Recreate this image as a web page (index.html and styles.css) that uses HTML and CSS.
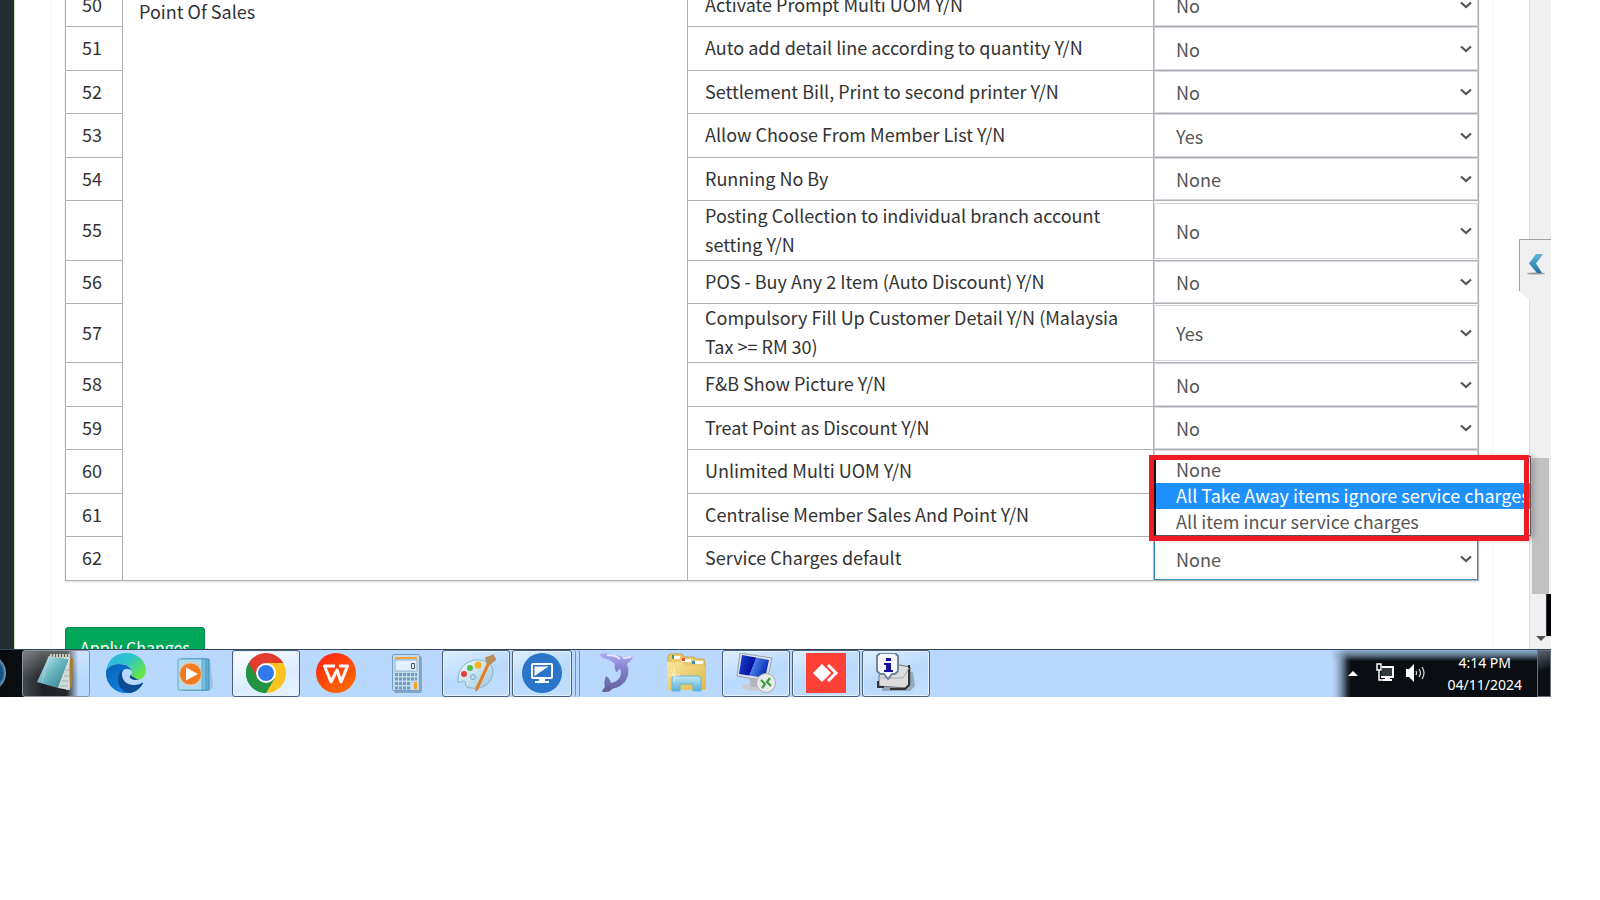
FILE: index.html
```html
<!DOCTYPE html>
<html lang="en">
<head>
<meta charset="utf-8">
<title>Point Of Sales settings</title>
<link rel="stylesheet" href="styles.css">
</head>
<body>
<svg class="defs" aria-hidden="true"><symbol id="chev" viewBox="0 0 12 8"><path d="M1 1.5 6 6 11 1.5" fill="none" stroke="#555" stroke-width="2.2"/></symbol></svg>
<main class="view">
  <aside class="side"></aside>
  <section class="content">
    <div class="panel">
      <table class="settings">
        <colgroup><col class="c-no"><col class="c-group"><col class="c-name"><col class="c-value"></colgroup>
        <tbody>
        <tr><td class="no">50</td><td class="group" rowspan="13">Point Of Sales</td><td class="name"><label for="s50">Activate Prompt Multi UOM Y/N</label></td><td class="value"><div class="pick"><select id="s50"><option>No</option><option>Yes</option></select><svg class="chev"><use href="#chev"/></svg></div></td></tr>
        <tr class="plus"><td class="no">51</td><td class="name"><label for="s51">Auto add detail line according to quantity Y/N</label></td><td class="value"><div class="pick"><select id="s51"><option>No</option><option>Yes</option></select><svg class="chev"><use href="#chev"/></svg></div></td></tr>
        <tr><td class="no">52</td><td class="name"><label for="s52">Settlement Bill, Print to second printer Y/N</label></td><td class="value"><div class="pick"><select id="s52"><option>No</option><option>Yes</option></select><svg class="chev"><use href="#chev"/></svg></div></td></tr>
        <tr class="plus"><td class="no">53</td><td class="name"><label for="s53">Allow Choose From Member List Y/N</label></td><td class="value"><div class="pick"><select id="s53"><option>Yes</option><option>No</option></select><svg class="chev"><use href="#chev"/></svg></div></td></tr>
        <tr><td class="no">54</td><td class="name"><label for="s54">Running No By</label></td><td class="value"><div class="pick"><select id="s54"><option>None</option></select><svg class="chev"><use href="#chev"/></svg></div></td></tr>
        <tr class="tall plus"><td class="no">55</td><td class="name"><label for="s55">Posting Collection to individual branch account setting Y/N</label></td><td class="value"><div class="pick"><select id="s55"><option>No</option><option>Yes</option></select><svg class="chev"><use href="#chev"/></svg></div></td></tr>
        <tr><td class="no">56</td><td class="name"><label for="s56">POS - Buy Any 2 Item (Auto Discount) Y/N</label></td><td class="value"><div class="pick"><select id="s56"><option>No</option><option>Yes</option></select><svg class="chev"><use href="#chev"/></svg></div></td></tr>
        <tr class="tall"><td class="no">57</td><td class="name"><label for="s57">Compulsory Fill Up Customer Detail Y/N (Malaysia Tax &gt;= RM 30)</label></td><td class="value"><div class="pick"><select id="s57"><option>Yes</option><option>No</option></select><svg class="chev"><use href="#chev"/></svg></div></td></tr>
        <tr class="plus"><td class="no">58</td><td class="name"><label for="s58">F&amp;B Show Picture Y/N</label></td><td class="value"><div class="pick"><select id="s58"><option>No</option><option>Yes</option></select><svg class="chev"><use href="#chev"/></svg></div></td></tr>
        <tr><td class="no">59</td><td class="name"><label for="s59">Treat Point as Discount Y/N</label></td><td class="value"><div class="pick"><select id="s59"><option>No</option><option>Yes</option></select><svg class="chev"><use href="#chev"/></svg></div></td></tr>
        <tr class="plus"><td class="no">60</td><td class="name"><label for="s60">Unlimited Multi UOM Y/N</label></td><td class="value"><div class="pick"><select id="s60"><option></option></select></div></td></tr>
        <tr><td class="no">61</td><td class="name"><label for="s61">Centralise Member Sales And Point Y/N</label></td><td class="value"><div class="pick"><select id="s61"><option></option></select></div></td></tr>
        <tr class="plus"><td class="no">62</td><td class="name"><label for="s62">Service Charges default</label></td><td class="value"><div class="pick"><select id="s62" class="active"><option>None</option></select><svg class="chev"><use href="#chev"/></svg>
          <ul class="popup" role="listbox" aria-label="Service Charges default">
            <li role="option">None</li>
            <li role="option" aria-selected="true" class="hot">All Take Away items ignore service charges</li>
            <li role="option">All item incur service charges</li>
          </ul>
          <div class="marker"></div></div></td></tr>
        </tbody>
      </table>
      <button class="apply" type="button">Apply Changes</button>
    </div>
  </section>
  <div class="scroll">
    <div class="thumb"></div>
    <div class="edge"></div>
    <svg class="down" viewBox="0 0 10 5"><path d="M0 0h10L5 5z" fill="#505050"/></svg>
  </div>
  <button class="drawer" type="button" aria-label="Open panel">
    <svg viewBox="0 0 32 62">
      <defs><linearGradient id="dg" x1="0" y1="0" x2="0" y2="1"><stop offset="0" stop-color="#5fb4dc"/><stop offset="1" stop-color="#1f779f"/></linearGradient></defs>
      <path d="M0 0H32V62H11L0 52z" fill="#efefef"/><path d="M.5 52V.5H32" fill="none" stroke="#a0a0a0"/>
      <ellipse cx="17" cy="34.500" rx="9" ry="1" fill="#999"/><path d="M17 15h7l-7 9.500 6 9.500h-5l-8-9.500z" fill="url(#dg)"/>
    </svg>
  </button>
</main>
<footer class="taskbar">
  <svg class="orb" viewBox="0 0 22 44"><defs><radialGradient id="og"><stop offset="0" stop-color="#2b7fc0"/><stop offset=".8" stop-color="#14507f"/><stop offset="1" stop-color="#7aa5c4"/></radialGradient></defs><circle cx="-12" cy="23" r="18" fill="url(#og)"/></svg>
  <nav class="tasks">
    <button class="task open dark" type="button" aria-label="Notepad"><svg viewBox="0 0 40 40">
      <defs><linearGradient id="n1" x1="0" y1="0" x2="1" y2="1"><stop offset="0" stop-color="#d5f2f3"/><stop offset=".5" stop-color="#67b3bf"/><stop offset="1" stop-color="#2f7885"/></linearGradient></defs>
      <path d="M32 4l5 2-1 28-6 3z" fill="#a97b35"/><path d="M15 4h19l-2 33-14-5z" fill="#e9eeee"/><path d="M13 3 33 6 22 35 1 29z" fill="url(#n1)"/><path d="M22 35l11-29 1 31z" fill="#d3dbd9"/><path d="M13 3l-7 27" stroke="#b9e1e4" opacity=".6"/><path d="M14 3h21" stroke="#c8c8bb" stroke-width="4" stroke-dasharray="2 1"/><path d="M24 33h8M26 28h6M28 23h5M30 17h4" stroke="#a5adad"/></svg></button>
    <button class="task" type="button" aria-label="Edge"><svg viewBox="0 0 40 40">
      <defs><linearGradient id="e1" x1="0" y1="0" x2="1" y2=".7"><stop offset="0" stop-color="#2bb4e8"/><stop offset=".5" stop-color="#2cc5cb"/><stop offset="1" stop-color="#6be83f"/></linearGradient><linearGradient id="e2" x1="0" y1="0" x2=".7" y2="1"><stop offset="0" stop-color="#0b62b5"/><stop offset="1" stop-color="#0c82e0"/></linearGradient></defs>
      <path d="M0 18C0 32 9 40 20 40c7 0 13-3 17-10L20 12z" fill="url(#e2)"/><path d="M0 18C2 6 10 0 20 0c12 0 20 8 20 17 0 6-4 10-10 10-4 0-7-2-6-4 1-1 2-2 2-4 0-4-4-8-12-8C7 11 2 14 0 18z" fill="url(#e1)"/><path d="M0 18c2-4 7-7 13-7 8 0 13 4 13 8 0 3-2 3-2 5L15 27l2 12C7 38-1 29 0 18z" fill="url(#e2)"/><path d="M16 17c-7 6-5 22 8 23 6-1 11-5 13-10z" fill="#0e4b96"/><path d="M26 19c0 3-2 3-2 4-1 2 2 4 6 4 3 0 5-1 7-2v4c-2 2-5 3-9 3-7 0-12-4-12-11 0-3 2-5 5-5s5 1 5 3z" fill="#b8d9fd"/></svg></button>
    <button class="task" type="button" aria-label="Media Player"><svg viewBox="0 0 40 40">
      <path d="M8 37l26 1 3-4-3-28H8z" fill="#7fa9c9" opacity=".5"/><rect x="8" y="6" width="25" height="31" rx="1" fill="#65aed4" stroke="#3b8dbb"/><rect x="5" y="6" width="25" height="31" rx="1" fill="#78bfdf" stroke="#4895bd"/><rect x="2" y="6" width="24" height="31" rx="1" fill="#b2dced" stroke="#65a9c7"/><circle cx="14.500" cy="21" r="11" fill="#f27a20" stroke="#f9c28e"/><path d="M10 14.500v13L22 21z" fill="#fff"/></svg></button>
    <button class="task open light" type="button" aria-label="Chrome"><svg viewBox="0 0 40 40">
      <path d="M20 20 2.700 10A20 20 0 0 1 37.300 10z" fill="#e33b2e"/><path d="M20 20 37.300 10A20 20 0 0 1 20 40z" fill="#fcc31e"/><path d="M20 20V40A20 20 0 0 1 2.700 10z" fill="#229342"/><path d="M20 10h17.300l-8.600 15z" fill="#fcc31e"/><path d="M2.700 10 11.300 25 20 20V10z" fill="#e33b2e"/><path d="M2.700 10 11.300 25 20 30l9-5-9 15A20 20 0 0 1 2.700 10z" fill="#229342"/><circle cx="20" cy="20" r="10" fill="#fff"/><circle cx="20" cy="20" r="8" fill="#2f7bed"/></svg></button>
    <button class="task" type="button" aria-label="WPS Office"><svg viewBox="0 0 40 40">
      <defs><linearGradient id="w1" x1="0" y1="0" x2=".7" y2="1"><stop offset="0" stop-color="#ff1f18"/><stop offset="1" stop-color="#ff6a00"/></linearGradient></defs><circle cx="20" cy="20" r="20" fill="url(#w1)"/><path d="M19 13H8.500L15 29l6-12 4 12 6.500-16H23" fill="none" stroke="#fff" stroke-width="3" stroke-linejoin="round"/></svg></button>
    <button class="task" type="button" aria-label="Calculator"><svg viewBox="0 0 40 40">
      <rect x="8" y="3" width="28" height="37" rx="2" fill="#6c8faf" opacity=".7"/><rect x="6.500" y="1.500" width="27" height="36" rx="1" fill="#c3dbea" stroke="#6f9fc3"/><rect x="9" y="4" width="22" height="2" fill="#f1a43a"/><rect x="9" y="7" width="22" height="11" fill="#e5f1fa" stroke="#8fb4d1"/><path d="M25.500 10.500h3v5h-3z" fill="none" stroke="#456"/><path d="M9 21.500h22M9 26h22M9 30.500h16M9 35h16" stroke="#6b9cc3" stroke-width="3" stroke-dasharray="3 1"/><rect x="28" y="29" width="3" height="7" fill="#f1a020"/></svg></button>
    <button class="task open" type="button" aria-label="Paint"><svg viewBox="0 0 40 40">
      <defs><linearGradient id="p1" x1="0" y1="0" x2="1" y2="1"><stop offset="0" stop-color="#f2fbff"/><stop offset="1" stop-color="#9cc9de"/></linearGradient></defs>
      <path d="M2 29C1 15 12 6 23 7c11 0 16 8 13 17-4 11-16 13-25 10-3-1 0-5-3-6-2 0-4 2-6 1z" fill="url(#p1)" stroke="#89b2c9"/><circle cx="8" cy="21" r="3" fill="#e6413a"/><circle cx="14" cy="15" r="3" fill="#53bb4d"/><circle cx="22" cy="12" r="3.500" fill="#fbb01c"/><circle cx="17" cy="24" r="2.500" fill="#c3dff3" stroke="#7fa6c2"/><path d="M34 11 22 37l-3 2 1-5 11-24z" fill="#e07f28"/><path d="M30 10c0-4-2-5 0-6 2-1 5-1 7-3 1 2 3 3 3 6l-6 5z" fill="#b98c5e"/></svg></button>
    <div class="stack"><button class="task open" type="button" aria-label="Remote desktop"><svg viewBox="0 0 40 40">
      <circle cx="20" cy="20" r="20" fill="#2a75c9"/><rect x="10" y="11" width="20" height="14" rx="1" fill="none" stroke="#fff" stroke-width="2"/><path d="M12.500 13.500h14l-14 9.500z" fill="#fff"/><path d="M17 26h6v2h4v2H13v-2h4z" fill="#fff"/></svg></button><i></i><i></i></div>
    <button class="task" type="button" aria-label="MySQL"><svg viewBox="0 0 40 40">
      <defs><linearGradient id="d1" x1="0" y1="0" x2="0" y2="1"><stop offset="0" stop-color="#b1aaf3"/><stop offset=".4" stop-color="#8780d0"/><stop offset="1" stop-color="#625e96"/></linearGradient></defs><path d="M4 1c5-1 10-1 15 1 3 0 5 1 7 2 3-1 7-1 11 0-1 3-4 5-6 7 4 11-1 22-15 25-2 3-5 3-10 3 1-3 2-4 3-5-1-3-1-7 1-11 3 2 4 4 5 7 8-2 10-6 10-12l-2-3c0 2-1 4-3 4-1-3-2-5-1-8-3-3-7-5-12-6-1-1-3-2-3-4z" fill="url(#d1)"/><path d="M11 2c6 0 10 1 13 4M27 5l8-1" stroke="#e9e7ff" stroke-width="2" fill="none"/></svg></button>
    <button class="task" type="button" aria-label="Explorer"><svg viewBox="0 0 40 40">
      <defs><linearGradient id="f1" x1="0" y1="0" x2="1" y2="1"><stop offset="0" stop-color="#f9e59a"/><stop offset="1" stop-color="#dfb84c"/></linearGradient><linearGradient id="f2" x1="0" y1="0" x2="0" y2="1"><stop offset="0" stop-color="#bfe7f5"/><stop offset="1" stop-color="#57b0d6"/></linearGradient></defs>
      <path d="M2 36V3l2-2h12l2 3h10l2 2h8l1 4v26z" fill="#e9c96b" stroke="#c9a64a"/><path d="M6 3h8v3H6zM16 6h9v3h-9zM26 8h11v3H26z" fill="#fff"/><path d="M6 2h2v4H6z" fill="#3da047"/><path d="M16 5h3v3h-3z" fill="#dd4f36"/><path d="M26 8h3v3h-3z" fill="#3c84cf"/><path d="M1 9h15l3 4h20v24H1z" fill="url(#f1)"/><path d="M6 38V25l3-2h24l2 2v13h-8v-7H14v7z" fill="url(#f2)" stroke="#68b6d6"/><path d="M2 22l12 0M8 15v14M4 17l8 9" stroke="#fff" opacity=".6"/></svg></button>
    <button class="task open" type="button" aria-label="Remote Desktop Connection"><svg viewBox="0 0 40 40">
      <defs><linearGradient id="r1" x1="0" y1="0" x2="1" y2=".3"><stop offset="0" stop-color="#1a46d0"/><stop offset=".55" stop-color="#0512a0"/><stop offset=".56" stop-color="#4b7be8"/><stop offset="1" stop-color="#1133ba"/></linearGradient></defs><ellipse cx="17" cy="34" rx="11" ry="4" fill="#c7ccd0"/><path d="M13 25h9l2 9h-9z" fill="#b2b8be"/><path d="M4 0l32 5-5 23L1 23z" fill="#dce1e6" stroke="#9aa3ad"/><path d="M6 2l27 5-4 18L3 21z" fill="url(#r1)"/><circle cx="30" cy="30" r="9.500" fill="#e9ebea" stroke="#a7aba9"/><path d="M25 27l4 4-3 4M34 25l-3 4 4 4" fill="none" stroke="#3d9d35" stroke-width="2.200"/></svg></button>
    <button class="task open" type="button" aria-label="AnyDesk"><svg viewBox="0 0 40 40"><path d="M0 0h40v40H0z" fill="#fd4136"/><path d="M7 20l9-9 9 9-9 9z" fill="#fff"/><path d="M22 12l8 8-8 8" fill="none" stroke="#fff" stroke-width="3"/></svg></button>
    <button class="task open" type="button" aria-label="Installer"><svg viewBox="0 0 40 40">
      <path d="M6 38h28l5-5-2-14H8z" fill="#6b7884" opacity=".5"/><path d="M3 22 24 12l10 2v18l-4 3-27-2z" fill="#dcdcdc" stroke="#707070"/><path d="M33 12v20l-4 4H14M2 28v6h6" fill="none" stroke="#333" stroke-width="2"/><path d="M4 25h23l6-10" fill="none" stroke="#aaa"/><path d="M4 0h15l3 3v15l-3 3h-3l-4 5-4-5H4l-3-3V3z" fill="#f5f8fc" stroke="#7184a0" stroke-width="2"/><path d="M10 5h5v3h-5zM8 10h7v7h2v2H8v-2h2v-5H8z" fill="#14149a"/></svg></button>
  </nav>
  <div class="tray">
    <svg class="up" viewBox="0 0 10 5"><path d="M5 0l5 5H0z" fill="#fff"/></svg>
    <svg class="net" viewBox="0 0 20 20"><path d="M2 1h4v6H2zM4 7v10h4" fill="none" stroke="#fff" stroke-width="1.500"/><path d="M7 4h11v10H6" fill="#333a40" stroke="#fff" stroke-width="2"/><path d="M10 14h5v2h2v2H8v-2h2z" fill="#fff"/></svg>
    <svg class="vol" viewBox="0 0 20 20"><path d="M1 6h3l5-5v18l-5-5H1z" fill="#fff"/><path d="M11 8q1 2 0 4M14 6q3 4 0 8M17 4q4 6 0 12" fill="none" stroke="#ddd" stroke-width="1.200"/></svg>
    <div class="clock"><time>4:14 PM</time><time>04/11/2024</time></div>
    <button class="desk" type="button" aria-label="Show desktop"></button>
  </div>
</footer>
</body>
</html>
```

FILE: styles.css
```css
* { box-sizing: border-box; }
body {
  margin: 0;
  height: 100vh;
  padding: 0 49px 203px 0;
  display: flex;
  flex-direction: column;
  overflow: hidden;
  background: #fff;
  color: #333;
  font: 18px/29px "Noto Sans CJK SC", "Open Sans", sans-serif;
}
button, select { font: inherit; margin: 0; }
.defs { position: absolute; width: 0; height: 0; }

.view {
  flex: 1;
  min-height: 0;
  display: flex;
  position: relative;
  overflow: hidden;
}
.side { flex: none; width: 15px; background: #222d32; border-right: 1px solid #d0e8b8; }
.content { flex: 1; padding: 0 36px; border-right: 1px solid #d5e3cb; }
.panel { border: solid #f6f6f6; border-width: 0 1px; padding: 0 13px; }

.settings {
  width: 100%;
  margin-top: -17px;
  table-layout: fixed;
  border-collapse: collapse;
  box-shadow: 0 1px 2px #ddd;
}
.c-no { width: 57px; }
.c-group { width: 40%; }
.c-name { width: 33%; }
.c-value { width: 23%; }
.settings td { border: 1px solid #b0b0b0; padding: 0 16px; }
.settings tr { height: 43px; }
.settings tr.plus { height: 44px; }
.settings tr.tall { height: 59px; }
.settings tr.tall.plus { height: 60px; }
.settings td.no { padding-bottom: 2px; }
.settings td.group { vertical-align: top; padding-top: 13px; }
.settings td.name { padding-left: 17px; }
.settings td.value { padding: 0; }
.name label { display: block; margin: -1px 0 1px; }

.pick { position: relative; display: flex; align-items: center; }
.pick select {
  appearance: none;
  width: 100%;
  height: 42px;
  padding: 1px 21px 0;
  border: 1px solid #d2d6de;
  border-radius: 0;
  outline: 0;
  background: #fff;
  color: #555;
}
.plus .pick select { height: 43px; }
.tall .pick select { height: 56px; }
.pick select.active { border-color: #3c8dbc; }
.chev { position: absolute; right: 6px; width: 12px; height: 8px; pointer-events: none; }

.popup {
  position: absolute;
  left: 0;
  bottom: 44px;
  z-index: 2;
  width: 377px;
  margin: 0;
  border: 1px solid #555;
  border-left: 2px solid #111;
  padding: 0;
  list-style: none;
  background: #fff;
  box-shadow: 2px 2px 6px #888;
  color: #555;
  line-height: 26px;
  white-space: nowrap;
}
.popup li { height: 26px; padding-left: 20px; line-height: 24px; }
.popup .hot { background: #1e90ff; color: #fff; }
.marker {
  position: absolute;
  left: -5px;
  bottom: 39px;
  z-index: 3;
  width: 380px;
  height: 86px;
  border: 5px solid #ed1c24;
}

.apply {
  display: block;
  margin-top: 46px;
  padding: 5px 14px;
  border: 1px solid #008d4c;
  border-radius: 3px;
  background: #00a65a;
  color: #fff;
  font-size: 16px;
}

.scroll { flex: none; position: relative; width: 21px; background: #f0f0f0; }
.thumb { position: absolute; top: 458px; left: 2px; width: 17px; height: 136px; background: #c1c1c1; }
.edge { position: absolute; top: 594px; right: 0; width: 5px; height: 42px; background: #000; border-left: 1px solid #334; }
.down { position: absolute; bottom: 8px; left: 6px; width: 10px; height: 5px; }
.drawer {
  position: absolute;
  top: 239px;
  right: 0;
  width: 32px;
  height: 62px;
  padding: 0;
  border: 0;
  background: none;
}
.drawer svg { display: block; width: 32px; height: 62px; }

.taskbar {
  flex: none;
  height: 48px;
  display: flex;
  border-top: 1px solid #33475a;
  background: linear-gradient(90deg, #080b0e 0, #10151a 60px, transparent 80px) #b8d9fd;
}
.orb { flex: none; width: 22px; height: 44px; }
.tasks { display: flex; gap: 2px; }
.task {
  width: 68px;
  height: 47px;
  padding: 0 0 2px;
  display: flex;
  align-items: center;
  justify-content: center;
  border: 1px solid transparent;
  border-radius: 3px;
  background: none;
}
.task svg { width: 40px; height: 40px; }
.task.open {
  border-color: #4b6078;
  background: linear-gradient(160deg, #e0efff, #b9dafd 50%, #c2dffd);
  box-shadow: inset 0 0 0 1px #e3f1ff;
}
.task.light { background: linear-gradient(160deg, #fff, #d9ecff 60%, #e8f4ff); }
.task.dark {
  background:
    linear-gradient(180deg, rgba(255, 255, 255, .3), transparent 60%),
    linear-gradient(90deg, #444a50, #1f2327 30%, #23272b 66%, #b8d9fd 84%);
  border-color: #8b949c;
  box-shadow: none;
}
.stack { display: flex; width: 68px; }
.stack .task { width: 60px; }
.stack i { width: 4px; border-right: 1px solid #7890a8; border-radius: 0 3px 3px 0; }

.tray {
  margin-left: auto;
  width: 220px;
  display: flex;
  align-items: center;
  padding-bottom: 1px;
  color: #fff;
  background:
    linear-gradient(90deg, #b8d9fd 0, transparent 16px),
    linear-gradient(180deg, #8fb0d0 0, #62798f 5px, transparent 11px),
    linear-gradient(90deg, #a3c2e2 0, #0a0e12 20px);
}
.up { width: 10px; height: 5px; margin-left: 17px; }
.net { width: 20px; height: 20px; margin-left: 17px; }
.vol { width: 20px; height: 20px; margin-left: 10px; }
.clock {
  margin-left: auto;
  margin-right: 15px;
  display: flex;
  flex-direction: column;
  align-items: center;
  padding-top: 1px;
  font: 14px/22px "Noto Sans", sans-serif;
}
.desk {
  width: 14px;
  height: 47px;
  border: 1px solid #66717c;
  background: linear-gradient(160deg, #59636e, #0c1014 45%);
}
```
